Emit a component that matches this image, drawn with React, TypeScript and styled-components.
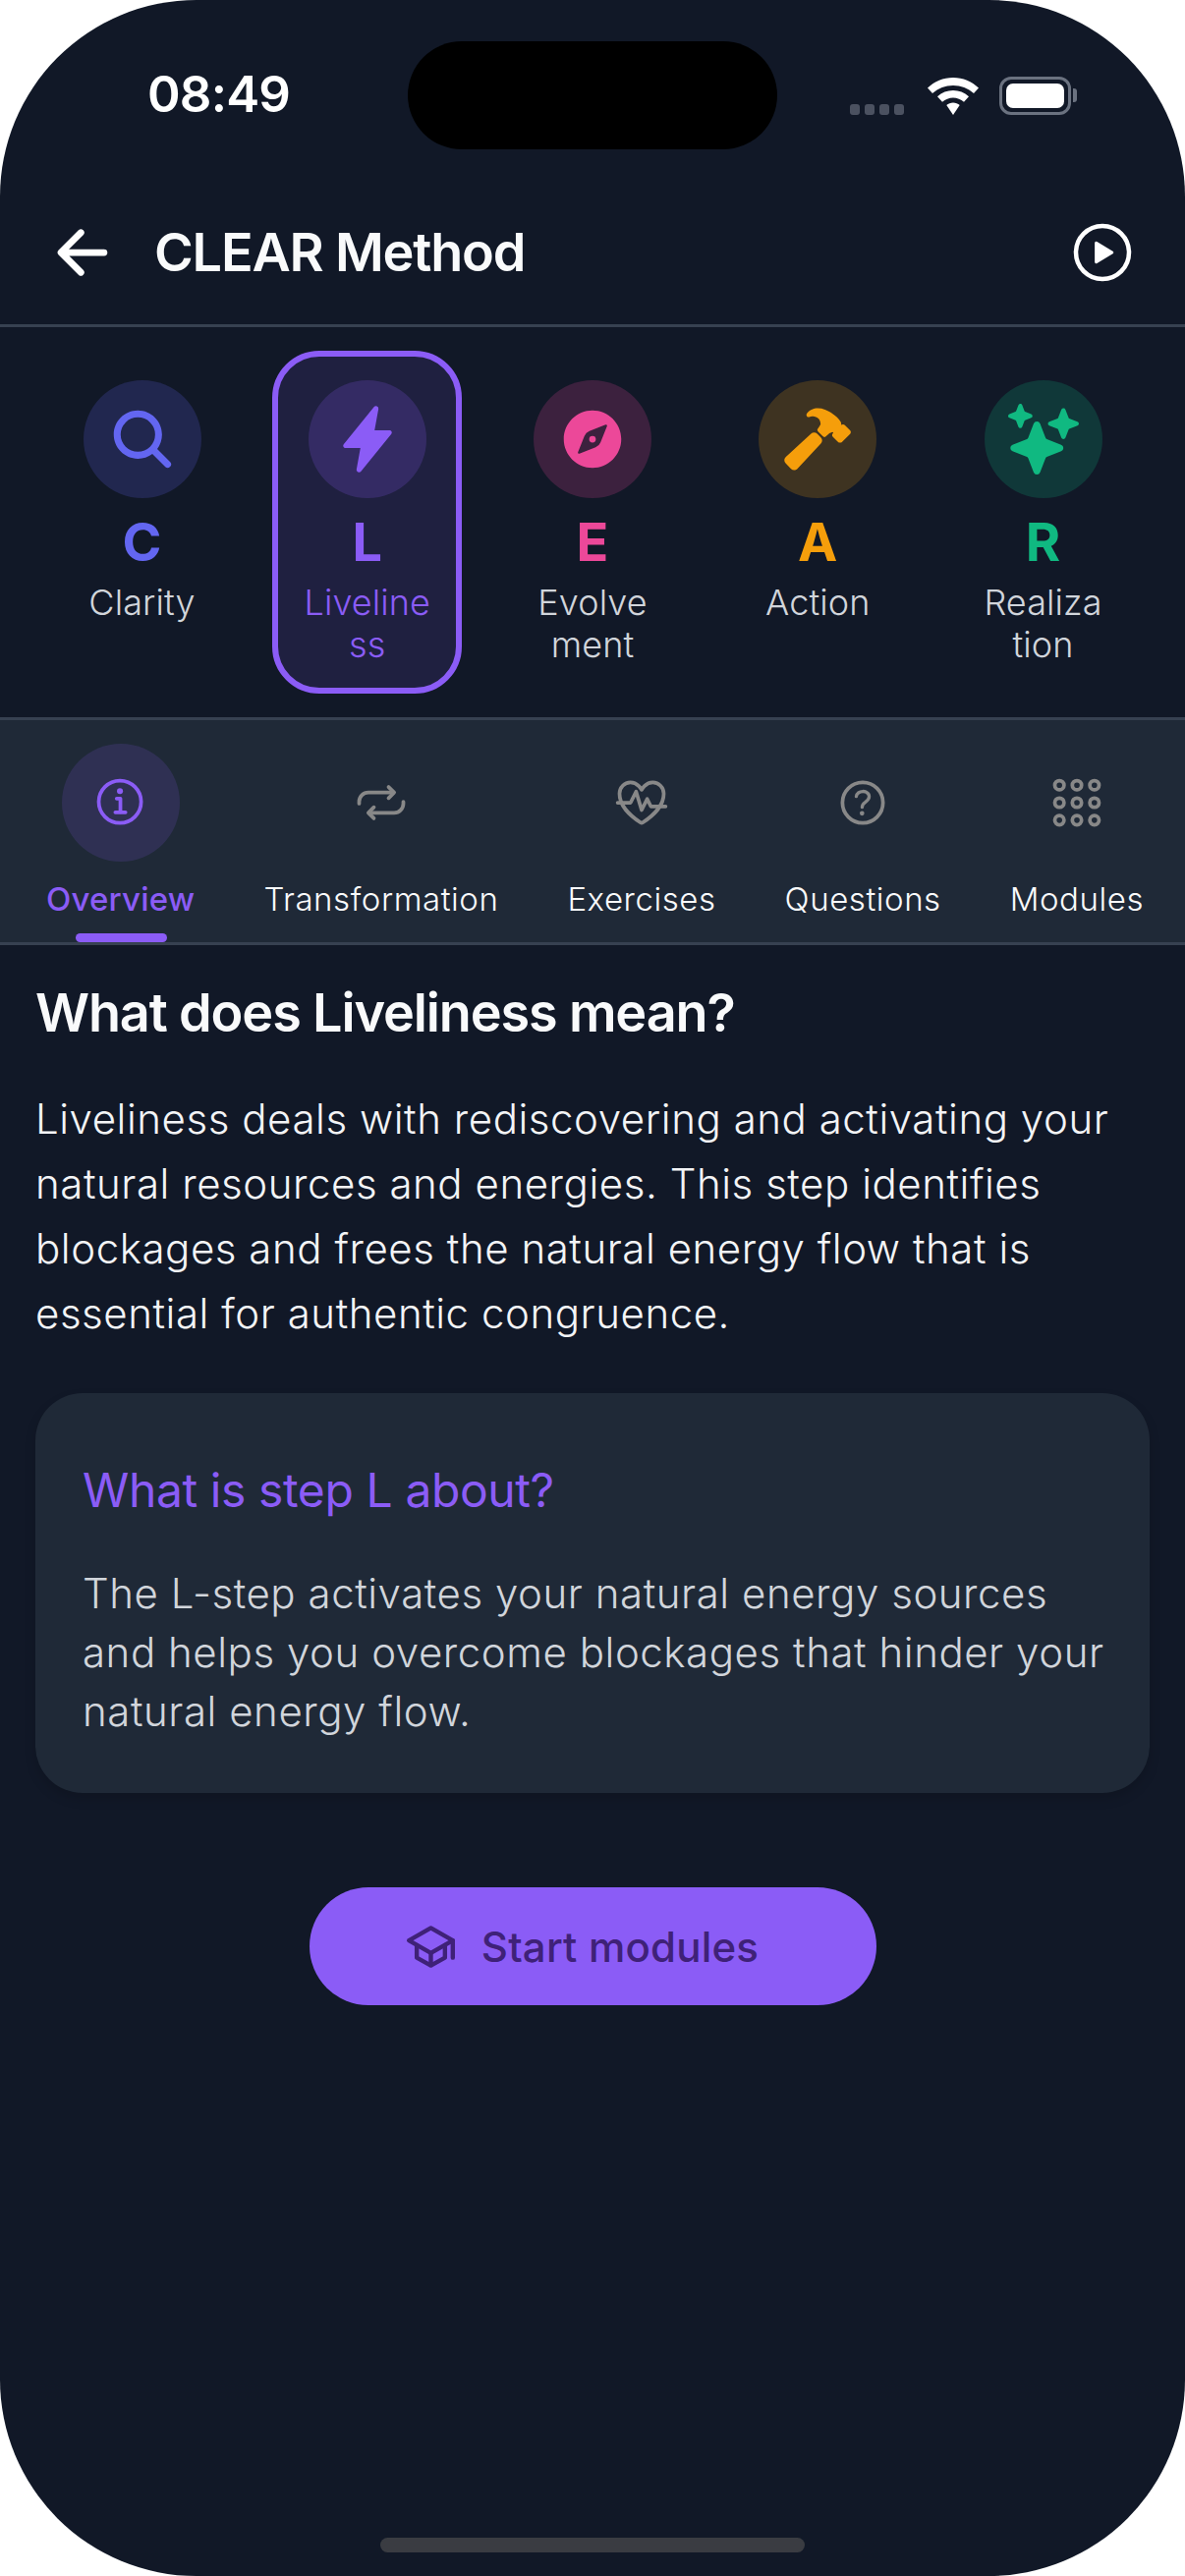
import type { FC, ReactNode } from 'react';
import styled, { createGlobalStyle } from 'styled-components';
import {
    IoArrowBack,
    IoAppsOutline,
    IoCompass,
    IoFitnessOutline,
    IoFlash,
    IoHammer,
    IoHelpCircleOutline,
    IoInformationCircleOutline,
    IoPlayCircleOutline,
    IoRepeatOutline,
    IoSchoolOutline,
    IoSearch,
    IoSparkles,
} from 'react-icons/io5';

const colors = {
    bg: '#111827',
    panel: '#1f2937',
    line: '#374151',
    primary: '#8b5cf6',
    muted: '#888888',
};

interface IStep {
    letter: string;
    label: string;
    color: string;
    icon: ReactNode;
    active?: boolean;
}

interface ITab {
    label: string;
    icon: ReactNode;
    active?: boolean;
}

const steps: IStep[] = [
    { letter: 'C', label: 'Clarity', color: '#6366f1', icon: <IoSearch size={72} /> },
    { letter: 'L', label: 'Liveliness', color: '#8b5cf6', icon: <IoFlash size={72} />, active: true },
    { letter: 'E', label: 'Evolvement', color: '#ec4899', icon: <IoCompass size={72} /> },
    { letter: 'A', label: 'Action', color: '#f59e0b', icon: <IoHammer size={72} /> },
    { letter: 'R', label: 'Realization', color: '#10b981', icon: <IoSparkles size={72} /> },
];

const tabs: ITab[] = [
    { label: 'Overview', icon: <IoInformationCircleOutline size={60} />, active: true },
    { label: 'Transformation', icon: <IoRepeatOutline size={60} /> },
    { label: 'Exercises', icon: <IoFitnessOutline size={60} /> },
    { label: 'Questions', icon: <IoHelpCircleOutline size={60} /> },
    { label: 'Modules', icon: <IoAppsOutline size={60} /> },
];

const GlobalStyle = createGlobalStyle`
    html, body {
        margin: 0;
        padding: 0;
        background: #ffffff;
    }

    * {
        box-sizing: border-box;
    }
`;

const Screen = styled.div`
    position: relative;
    width: 1206px;
    height: 2622px;
    overflow: hidden;
    border-radius: 200px;
    background: ${colors.bg};
    font-family: Inter, "Noto Sans", sans-serif;
    color: #ffffff;
`;

const StatusBar = styled.div`
    display: grid;
    grid-template-columns: 1fr 376px 1fr;
    height: 186px;
    padding-top: 42px;
`;

const Time = styled.div`
    padding: 30px 0 0 150px;
    font-size: 51px;
    line-height: 48px;
    font-weight: 600;
    letter-spacing: -0.8px;
`;

const Island = styled.div`
    height: 110px;
    border-radius: 55px;
    background: #000000;
`;

const StatusIcons = styled.div`
    display: flex;
    align-items: flex-start;
    padding: 36px 0 0 74px;
`;

const SignalDots = styled.div`
    display: flex;
    gap: 5px;
    margin-top: 28px;
`;

const SignalDot = styled.span`
    width: 10px;
    height: 11px;
    border-radius: 3px;
    background: #4b5160;
`;

const WifiIcon = styled.svg`
    width: 52px;
    height: 38px;
    margin: 1px 0 0 24px;
`;

const Battery = styled.div`
    position: relative;
    width: 73px;
    height: 39px;
    margin-left: 21px;
    padding: 4px;
    border: 3px solid #6b7280;
    border-radius: 12px;

    &::after {
        content: '';
        position: absolute;
        top: 9px;
        right: -9px;
        width: 4px;
        height: 14px;
        border-radius: 0 3px 3px 0;
        background: #6b7280;
    }
`;

const BatteryFill = styled.div`
    height: 100%;
    border-radius: 7px;
    background: #ffffff;
`;

const Header = styled.header`
    display: flex;
    align-items: center;
    height: 147px;
    padding: 0 48px 3px 48px;
    border-bottom: 3px solid ${colors.line};
`;

const HeaderTitle = styled.h1`
    flex: 1;
    margin: 0 0 0 37px;
    font-size: 54px;
    font-weight: 600;
    letter-spacing: -1.2px;
    color: #f9fafb;
`;

const IconSlot = styled.span`
    display: flex;
`;

const StepRow = styled.div`
    display: flex;
    justify-content: space-between;
    padding: 24px 48px;
    border-bottom: 3px solid ${colors.line};
`;

const StepCard = styled.div<{ $active?: boolean; $color: string }>`
    display: flex;
    flex-direction: column;
    align-items: center;
    width: 193px;
    height: 349px;
    padding: 24px 24px 0;
    border: 6px solid ${({ $active, $color }) => ($active ? $color : 'transparent')};
    border-radius: 48px;
    background: ${({ $active, $color }) => ($active ? `${$color}1f` : 'transparent')};
`;

const StepBubble = styled.div<{ $color: string }>`
    display: flex;
    flex-shrink: 0;
    align-items: center;
    justify-content: center;
    width: 120px;
    height: 120px;
    border-radius: 50%;
    background: ${({ $color }) => `${$color}33`};
    color: ${({ $color }) => $color};
`;

const StepLetter = styled.div<{ $color: string }>`
    margin-top: 12px;
    font-size: 54px;
    line-height: 66px;
    font-weight: 700;
    color: ${({ $color }) => $color};
`;

const StepLabel = styled.div<{ $active?: boolean; $color: string }>`
    flex-shrink: 0;
    width: 130px;
    margin-top: 7px;
    font-size: 36px;
    line-height: 43px;
    font-weight: 350;
    letter-spacing: 0.1px;
    text-align: center;
    word-break: break-all;
    color: ${({ $active, $color }) => ($active ? $color : '#d1d5db')};
`;

const TabRow = styled.div`
    display: flex;
    height: 229px;
    padding: 0 12px;
    background: ${colors.panel};
    border-bottom: 3px solid ${colors.line};
`;

const TabItem = styled.div`
    position: relative;
    display: flex;
    flex-direction: column;
    align-items: center;
    padding: 24px 35px 0;
`;

const TabBubble = styled.div<{ $active?: boolean }>`
    display: flex;
    align-items: center;
    justify-content: center;
    width: 120px;
    height: 120px;
    border-radius: 50%;
    background: ${({ $active }) => ($active ? `${colors.primary}26` : 'transparent')};
    color: ${({ $active }) => ($active ? colors.primary : colors.muted)};
`;

const TabLabel = styled.div<{ $active?: boolean }>`
    margin-top: 16px;
    font-size: 33px;
    line-height: 44px;
    font-weight: ${({ $active }) => ($active ? 500 : 350)};
    letter-spacing: ${({ $active }) => ($active ? '0.2px' : '0.55px')};
    white-space: nowrap;
    color: ${({ $active }) => ($active ? colors.primary : '#f9fafb')};
`;

const TabMarker = styled.span`
    position: absolute;
    left: 65px;
    bottom: 0;
    width: 93px;
    height: 9px;
    border-radius: 5px;
    background: ${colors.primary};
`;

const Content = styled.main`
    padding: 36px;
`;

const Heading = styled.h2`
    margin: 0 0 42px;
    font-size: 54px;
    line-height: 66px;
    font-weight: 600;
    letter-spacing: -1.15px;
    color: #f9fafb;
`;

const BodyText = styled.p`
    margin: 0 0 48px;
    font-size: 42px;
    line-height: 66px;
    font-weight: 350;
    letter-spacing: 0.55px;
    color: #f3f4f6;
`;

const InfoCard = styled.section`
    height: 407px;
    padding: 66px 30px 0 48px;
    border-radius: 48px;
    background: ${colors.panel};
    box-shadow: 0 6px 12px rgba(0, 0, 0, 0.15);
`;

const InfoTitle = styled.h3`
    margin: 0 0 42px;
    font-size: 48px;
    line-height: 66px;
    font-weight: 400;
    letter-spacing: -0.4px;
    color: ${colors.primary};
`;

const InfoText = styled.p`
    margin: 0;
    font-size: 42px;
    line-height: 60px;
    font-weight: 350;
    letter-spacing: 0.55px;
    color: #d1d5db;
`;

const StartButton = styled.button`
    display: flex;
    align-items: center;
    justify-content: center;
    gap: 26px;
    width: 577px;
    height: 120px;
    margin: 96px auto 0;
    padding: 0 21px 0 0;
    border: 0;
    border-radius: 60px;
    background: ${colors.primary};
    color: #3f2178;
    font-family: inherit;
    font-size: 42px;
    font-weight: 500;
    letter-spacing: 0.2px;

    svg * {
        stroke-width: 44px;
    }
`;

const HomeIndicator = styled.div`
    position: absolute;
    left: 387px;
    bottom: 24px;
    width: 432px;
    height: 15px;
    border-radius: 8px;
    background: #3a3c42;
`;

const StepTile: FC<IStep> = ({ letter, label, color, icon, active }) => (
    <StepCard $active={active} $color={color}>
        <StepBubble $color={color}>{icon}</StepBubble>
        <StepLetter $color={color}>{letter}</StepLetter>
        <StepLabel $active={active} $color={color}>{label}</StepLabel>
    </StepCard>
);

const TabTile: FC<ITab> = ({ label, icon, active }) => (
    <TabItem>
        <TabBubble $active={active}>{icon}</TabBubble>
        <TabLabel $active={active}>{label}</TabLabel>
        {active && <TabMarker />}
    </TabItem>
);

export default function App() {
    return (
        <Screen>
            <GlobalStyle />
            <StatusBar>
                <Time>08:49</Time>
                <Island />
                <StatusIcons>
                    <SignalDots>
                        <SignalDot />
                        <SignalDot />
                        <SignalDot />
                        <SignalDot />
                    </SignalDots>
                    <WifiIcon viewBox="0 0 52 38">
                        <path d="M26 0C16 0 7 4 0 10.500L5 16C11 10.800 18 8 26 8S41 10.800 47 16L52 10.500C45 4 36 0 26 0Z" fill="#fff" />
                        <path d="M26 13C20 13 14.500 15.200 10 19.300L15 24.800C18 22.200 22 20.600 26 20.600S34 22.200 37 24.800L42 19.300C37.500 15.200 32 13 26 13Z" fill="#fff" />
                        <path d="M26 25.500C23.500 25.500 21 26.400 19.300 28L26 38L32.700 28C31 26.400 28.500 25.500 26 25.500Z" fill="#fff" />
                    </WifiIcon>
                    <Battery>
                        <BatteryFill />
                    </Battery>
                </StatusIcons>
            </StatusBar>

            <Header>
                <IconSlot><IoArrowBack size={72} /></IconSlot>
                <HeaderTitle>CLEAR Method</HeaderTitle>
                <IconSlot><IoPlayCircleOutline size={72} /></IconSlot>
            </Header>

            <StepRow>
                {steps.map((step) => <StepTile key={step.letter} {...step} />)}
            </StepRow>

            <TabRow>
                {tabs.map((tab) => <TabTile key={tab.label} {...tab} />)}
            </TabRow>

            <Content>
                <Heading>What does Liveliness mean?</Heading>
                <BodyText>
                    Liveliness deals with rediscovering and activating your natural resources and energies.
                    This step identifies blockages and frees the natural energy flow that is essential for
                    authentic congruence.
                </BodyText>
                <InfoCard>
                    <InfoTitle>What is step L about?</InfoTitle>
                    <InfoText>
                        The L-step activates your natural energy sources and helps you overcome blockages
                        that hinder your natural energy flow.
                    </InfoText>
                </InfoCard>
                <StartButton>
                    <IoSchoolOutline size={51} />
                    Start modules
                </StartButton>
            </Content>

            <HomeIndicator />
        </Screen>
    );
}
